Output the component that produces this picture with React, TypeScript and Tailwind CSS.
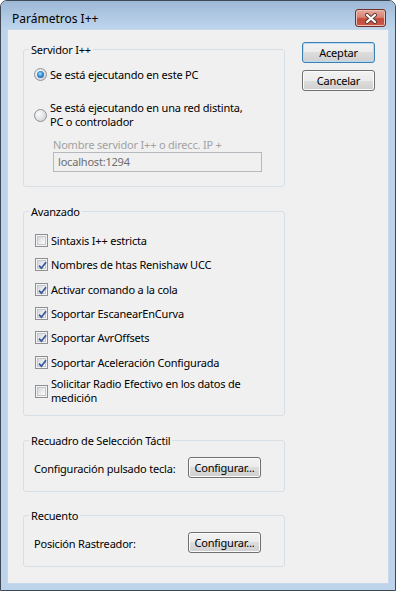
import React from 'react'

const Radio = ({ checked }: { checked?: boolean }) => (
  <span className="flex h-[13px] w-[13px] shrink-0 items-center justify-center rounded-full border border-[#8f9193] bg-[radial-gradient(circle_at_35%_35%,#fbfbfb_0%,#e2e4e7_50%,#c6cacf_100%)]">
    {checked && (
      <span className="h-[7px] w-[7px] rounded-full bg-[radial-gradient(circle_at_45%_40%,#b8e6ff_0%,#3d95dc_40%,#0f477f_100%)]" />
    )}
  </span>
)

const Check = ({ checked }: { checked?: boolean }) => (
  <span className="flex h-[13px] w-[13px] shrink-0 border border-[#8f8f8f] bg-[#f4f4f4] p-[1px]">
    <span className="relative flex flex-1 items-center justify-center border border-[#c4c7cb] bg-[linear-gradient(135deg,#d5d8dc_0%,#eceef0_60%,#fbfbfb_100%)]">
      {checked && (
        <svg width="11" height="11" viewBox="0 0 11 11" className="absolute -left-[1px] -top-[1px]">
          <path d="M2 5.6 L4.4 8.2 L9 2.3" fill="none" stroke="#3558a0" strokeWidth="1.8" />
        </svg>
      )}
    </span>
  </span>
)

const Button = ({ label, primary }: { label: string; primary?: boolean }) => (
  <button
    className={`flex h-[21px] w-[73px] items-center justify-center rounded-[3px] border bg-[linear-gradient(to_bottom,#f2f2f2_0%,#ebebeb_50%,#dddddd_50%,#cfcfcf_100%)] leading-none text-black ${
      primary ? 'border-[#3c7fb1] shadow-[inset_0_0_0_1px_#b5dcf3]' : 'border-[#707070] shadow-[inset_0_0_0_1px_#fbfbfb]'
    }`}
  >
    {label}
  </button>
)

const Group = ({ title, className, children }: { title: string; className: string; children: React.ReactNode }) => (
  <fieldset className={`rounded-[3px] border border-[#d5dfe5] ${className}`}>
    <legend className="ml-[5px] px-[2px] leading-[15px]">{title}</legend>
    {children}
  </fieldset>
)

const options: { label: string; checked: boolean; h: string }[] = [
  { label: 'Sintaxis I++ estricta', checked: false, h: 'h-[24px]' },
  { label: 'Nombres de htas Renishaw UCC', checked: true, h: 'h-[25px]' },
  { label: 'Activar comando a la cola', checked: true, h: 'h-[24px]' },
  { label: 'Soportar EscanearEnCurva', checked: true, h: 'h-[24px]' },
  { label: 'Soportar AvrOffsets', checked: true, h: 'h-[25px]' },
  { label: 'Soportar Aceleración Configurada', checked: true, h: 'h-[24px]' },
]

export default function App() {
  return (
    <div className="flex h-[591px] w-[396px] flex-col overflow-hidden rounded-t-[7px] border border-[#3f4955] bg-[#bcd3ea] font-['Noto_Sans',sans-serif] text-[11px] tracking-[-0.2px] text-black">
      {/* caption */}
      <div className="flex h-[28px] shrink-0 items-start justify-between bg-[linear-gradient(to_bottom,#9db8d6_0%,#b2cae4_60%,#bdd4ec_100%)] pl-[11px] pr-[9px]">
        <span className="mt-[10px] text-[12px] leading-[15px] tracking-normal">Parámetros I++</span>
        <span className="mt-[8px] flex h-[18px] w-[31px] items-center justify-center rounded-[3px] border border-[#6e3029] bg-[linear-gradient(to_bottom,#e6a99c_0%,#d98474_45%,#c24a3b_55%,#c8594a_100%)] shadow-[inset_0_0_0_1px_#eebfb5]">
          <svg width="14" height="11" viewBox="0 0 14 11">
            <path d="M3 2 L11 9 M11 2 L3 9" stroke="#5b3a36" strokeWidth="4" strokeLinecap="round" />
            <path d="M3 2 L11 9 M11 2 L3 9" stroke="#ffffff" strokeWidth="2.2" strokeLinecap="round" />
          </svg>
        </span>
      </div>

      {/* client area */}
      <div className="mx-[6px] mb-[6px] flex flex-1 border border-[#c6d8ea] bg-[#f0f0f0] pl-[15px] pt-[12px]">
        <div className="flex w-[262px] flex-col">
          <Group title="Servidor I++" className="h-[145px]">
            <div className="flex flex-col pl-[10px]">
              <div className="mt-[10px] flex h-[15px] items-center gap-[3px]">
                <Radio checked />
                <span className="leading-[15px]">Se está ejecutando en este PC</span>
              </div>
              <div className="mt-[19px] flex items-center gap-[3px]">
                <Radio />
                <span className="leading-[14px]">
                  Se está ejecutando en una red distinta,
                  <br />
                  PC o controlador
                </span>
              </div>
              <span className="ml-[19px] mt-[8px] leading-[15px] text-[#a2a2a2]">Nombre servidor I++ o direcc. IP +</span>
              <div className="ml-[19px] flex h-[20px] w-[209px] items-center border border-[#b5b8bd] bg-[#f0f0f0] pl-[4px] text-[#6d6d6d]">
                localhost:1294
              </div>
            </div>
          </Group>

          <Group title="Avanzado" className="mt-[17px] h-[212px]">
            <div className="mt-[9px] flex flex-col pl-[11px]">
              {options.map((o) => (
                <div key={o.label} className={`flex items-center gap-[3px] ${o.h}`}>
                  <Check checked={o.checked} />
                  <span className="leading-[15px]">{o.label}</span>
                </div>
              ))}
              <div className="mt-[3px] flex items-center gap-[3px]">
                <Check />
                <span className="leading-[14px]">
                  Solicitar Radio Efectivo en los datos de
                  <br />
                  medición
                </span>
              </div>
            </div>
          </Group>

          <Group title="Recuadro de Selección Táctil" className="mt-[17px] h-[59px]">
            <div className="mt-[9px] flex h-[21px] items-center pl-[10px]">
              <span className="w-[154px] pt-[2px] leading-[15px]">Configuración pulsado tecla:</span>
              <Button label="Configurar..." />
            </div>
          </Group>

          <Group title="Recuento" className="mt-[16px] h-[59px]">
            <div className="mt-[9px] flex h-[21px] items-center pl-[10px]">
              <span className="w-[154px] pt-[1px] leading-[15px]">Posición Rastreador:</span>
              <Button label="Configurar..." />
            </div>
          </Group>
        </div>

        <div className="ml-[17px] flex flex-col gap-[7px]">
          <Button label="Aceptar" primary />
          <Button label="Cancelar" />
        </div>
      </div>
    </div>
  )
}
